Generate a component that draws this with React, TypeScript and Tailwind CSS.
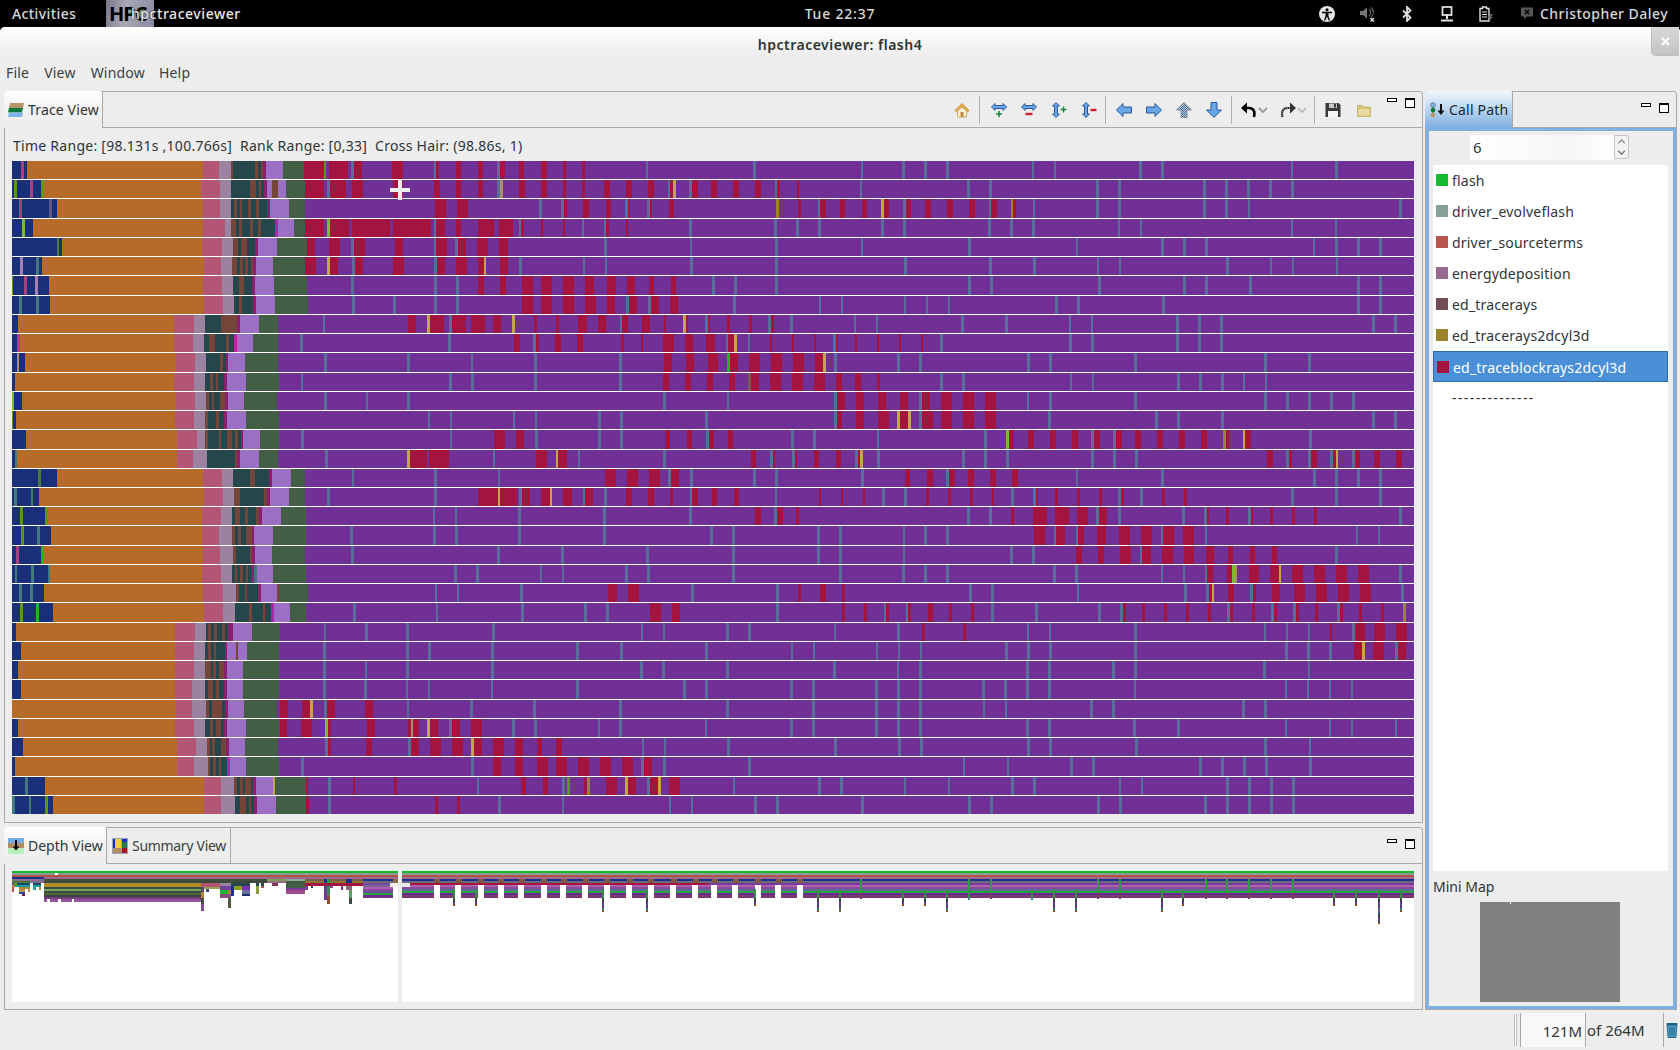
import React from 'react';

const colors: Record<string, string> = {
  N: '#192f7a', O: '#b76b29', P: '#b35676', G: '#9b82a0', T: '#25474c', B: '#744539',
  M: '#8a1f6e', H: '#a82aa8', L: '#9b70c4', F: '#425e44', C: '#a3143f', S: '#586e9b',
  Y: '#c4a54d', y: '#ab8f6a', Q: '#a8437f', g: '#a87fb5', A: '#42797a', W: '#5d9619',
  w: '#7ab93a', E: '#14b92e', D: '#9a8527', X: '#5d5880', K: '#4f7a3a', V: '#703096',
  Z: '#7a5a50',
};

// tops of the 34 rank rows
const rowTops = [161, 180, 199, 219, 238, 257, 276, 296, 315, 334, 353, 373, 392, 411, 430, 450, 469, 488, 507, 526, 546, 565, 584, 603, 623, 642, 661, 680, 700, 719, 738, 757, 777, 796, 815];
const zones = [0, 280, 660, 1040];

// every row: [left stack, bars from x=280, from x=660, from x=1040], values in thirds of a pixel
const rows: string[][] = [
  ['N36-63 Q63-72 N72-81 O81-609 P609-657 G657-693 B693-699 T699-765 B765-774 T774-783 B783-789 M789-798 L798-849 F849-912',
    'C72-132 W132-138 C147-204 S213-222 C222-246 C336-369 S462-468 C468-477 C528-543 C594-609 S651-660 C660-675 C717-732 C783-801 C849-858 C906-915 S1098-1104',
    'S279-288 S603-609 S726-735 S792-801 S858-867 S1116-1122',
    'S42-48 S297-306 S363-372 S753-759 S885-894'],
  ['N36-42 W42-51 N51-90 Q90-99 N99-123 W123-132 O132-603 P603-660 G660-693 T693-750 B750-768 T768-777 B777-783 T783-792 M792-801 L801-816 B816-834 L834-858 F858-915',
    'C75-132 S141-150 C150-198 C216-249 C339-369 C462-480 C528-543 C594-609 S651-660 y660-669 C717-735 C783-801 C849-858 C906-915 C972-990 C1038-1056 C1104-1122',
    'S24-30 C30-39 Y39-48 S87-96 C96-114 C153-171 C219-237 C285-303 S345-351 C351-360 C411-417 S600-606 S921-930 S987-996',
    'S168-177 S234-243 S489-498 S555-564 S621-630 S687-696 S753-762'],
  ['N36-57 Q57-66 N66-147 X147-156 N156-171 O171-609 P609-660 G660-693 T693-702 B702-711 T711-720 B720-726 T726-744 B744-753 T753-768 B768-777 T777-801 M801-810 L810-867 F867-915',
    'C465-498 C531-564 S777-786 S843-852 C852-861 C909-927 C978-993 S1035-1044 C1044-1050 S1101-1110 C1110-1116',
    'C27-42 D348-357 C414-423 S474-480 C480-498 C540-555 C606-621 Y663-672 C672-687 S729-738 C738-753 C795-813 C861-879 C927-945 S987-993 C993-1011 D1053-1059 C1059-1068 S1119-1125',
    'S168-177 S234-243 S489-498 S555-564 S624-630 S1077-1086'],
  ['N36-66 w66-75 N75-99 O99-609 P609-675 G675-693 B693-708 T708-717 B717-726 T726-750 B750-759 T759-774 B774-783 T783-825 H825-834 L834-882 F882-915',
    'C75-132 w141-150 C150-207 C216-330 C339-453 S462-468 C468-495 C528-543 C594-642 C657-699 S717-723 C723-732 C783-789 C849-855 S906-912 S972-978 C978-987 C1038-1044',
    'S87-96 S342-351 S408-417 S474-483 S663-672 S729-738 S984-993 S1050-1059 S1116-1125',
    'S234-240 S300-306 S753-759 S885-891'],
  ['N36-171 K171-177 N177-186 O186-606 P606-666 G666-699 B699-714 T714-723 B723-741 T741-765 M765-774 L774-831 F831-921',
    'C81-105 C147-180 S213-222 C222-255 C345-369 S462-468 C468-501 S525-534 C534-558 C591-624 C657-684 S972-981',
    'S90-96 S345-354 S603-609 S924-933',
    'S108-114 S363-372 S429-438 S495-504 S819-825 S885-894 S951-960 S1017-1026'],
  ['N36-60 g60-69 N69-108 A108-117 N117-126 O126-612 P612-663 G663-696 B696-711 T711-720 B720-729 T729-735 B735-744 T744-753 B753-759 M759-768 L768-819 F819-915',
    'C75-108 Y141-150 C150-174 S216-225 C225-249 C339-372 S462-471 C471-495 C528-561 C594-612 Y612-618 C660-684 S717-726 S909-915 S975-981',
    'S90-99 S345-354 S732-741 S987-996 S1119-1128',
    'S171-177 S237-243 S558-567 S690-696 S756-762 S888-894'],
  ['W36-39 N39-72 Q72-81 N81-105 g105-114 N114-147 O147-609 P609-666 G666-699 T699-717 B717-732 T732-756 M756-765 L765-822 F822-921',
    'S213-222 S462-471 S528-537 C594-612 C660-678 C726-759 C783-816 C849-882 C915-942 C981-1008 C1041-1065 C1107-1122',
    'C33-48 S156-165 S222-231 S345-354 S924-933 S990-999',
    'S174-183 S429-438 S495-504 S627-636 S951-960 S1017-1026'],
  ['N36-57 A57-66 N66-108 A108-117 N117-150 O150-612 P612-669 G669-702 T702-717 B717-726 T726-759 M759-768 L768-825 F825-924',
    'S216-225 S339-348 S462-471 S528-537 C726-759 C783-816 C849-882 C915-948 C981-1005 S1038-1047 C1047-1071 S1104-1113 C1113-1137',
    'C30-54 S219-228 S477-483 S543-549 S732-738 S798-804 S864-870',
    'S45-54 S111-120 S366-375 S951-960 S1017-1026'],
  ['N36-54 O54-522 P522-582 G582-615 T615-663 B663-711 M711-720 L720-777 F777-833',
    'S129-135 C384-408 Y441-450 C450-492 S507-516 C516-558 C573-615 C639-663 Y696-705 C762-771 C828-837 C894-921 C954-978 S1020-1026 C1026-1044 C1086-1110',
    'C12-18 Y69-78 C78-84 S135-144 C144-150 C201-210 C267-276 S324-333 C333-342 S390-399 S582-588 S648-654 S903-912 S1035-1044',
    'S87-93 S153-159 S408-417 S474-483 S540-549 S996-1005 S1062-1071'],
  ['N36-51 Q51-60 O60-522 P522-579 G579-612 T612-627 B627-645 T645-678 B678-687 T687-702 H702-711 L711-759 F759-833',
    'S60-69 S504-513 C702-720 S759-768 C768-777 C825-843 C891-909 C1023-1032 C1083-1089',
    'C9-42 C75-99 C138-165 S198-204 C204-222 Y222-231 S264-270 C330-336 C396-402 C462-468 S519-528 C528-534 C585-591 C651-657 C717-723 C783-789 S840-849',
    'S87-96 S153-162 S408-417 S474-483 S540-549'],
  ['N36-51 y51-57 N57-75 O75-528 P528-585 G585-618 T618-660 B660-669 T669-678 M678-684 L684-735 F735-833',
    'S132-141 S381-390 S573-579 S762-771 S1017-1026',
    'C12-36 C78-102 C144-174 E201-210 C210-234 C267-300 C333-366 C399-432 C465-489 Y489-498 S522-531 S711-720 S777-786 S1101-1110',
    'S27-36 S282-291 S672-681 S804-813'],
  ['N36-45 O45-522 P522-582 G582-615 T615-630 B630-639 T639-648 B648-654 T654-672 M672-681 L681-738 F738-837',
    'S63-69 S507-516 S573-582 S762-771 S1017-1026',
    'C9-27 C75-93 C141-159 C207-225 Z264-273 C273-297 C330-363 C396-429 C462-495 C528-546 C585-603 C651-660 S840-849 S906-915',
    'S90-96 S156-162 S411-420 S477-486 S543-552 S609-615 S675-681'],
  ['w36-42 N42-66 O66-528 P528-585 G585-618 B618-627 T627-636 B636-642 T642-660 B660-675 M675-684 L684-732 F732-831',
    'S132-141 S258-264 S381-390',
    'S9-18 S201-207 S522-531 C531-555 C588-612 C654-678 C720-744 S777-786 C786-810 C843-876 C909-942 C975-1008 S1101-1107',
    'S27-36 S282-291 S672-681 S738-747 S804-813 S870-879 S936-945'],
  ['W36-39 N39-48 O48-525 P525-582 G582-615 B615-624 T624-648 B648-657 T657-672 M672-681 L681-738 F738-837',
    'S444-450 S510-516 S699-705 S765-771 S954-963 S1020-1029',
    'S135-144 S522-531 C531-546 C588-612 C654-687 Y711-720 C720-744 Y744-753 S777-786 C786-819 C843-876 C909-942 C975-1008',
    'S24-33 S345-354 S411-420 S543-552 S996-1005 S1062-1071'],
  ['N36-78 O78-531 P531-591 G591-615 B615-624 T624-657 B657-663 T663-681 B681-696 T696-705 B705-714 T714-723 M723-729 L729-780 F780-837',
    'S63-72 S510-516 C642-675 C708-732 S765-774 S954-963 S1020-1029',
    'C15-30 C81-96 S138-147 C147-162 C204-219 S393-402 S459-468 S651-657 S972-981 w1038-1047 C1047-1062 C1104-1122',
    'C30-48 C96-114 S153-162 C162-180 S219-228 C228-246 C285-303 C351-369 C417-435 C483-501 D549-558 C558-567 Y609-615 C615-633 S807-816'],
  ['N36-45 A45-51 O51-531 P531-579 G579-621 T621-705 B705-711 M711-720 L720-777 F777-833',
    'S135-144 Y381-390 C390-441 C447-507 S639-645 C768-801 Y828-834 C834-861 S894-900',
    'S9-18 C273-288 S330-339 C339-345 S396-405 C405-411 C462-477 C528-543 S585-594 C594-600 Y600-609 S651-660 S906-915 S972-981 S1038-1047',
    'S153-162 S219-228 S285-294 C681-699 S738-747 C747-756 S804-813 C813-831 S870-879 C879-888 Y888-894 S936-945 C945-960 C1002-1020 C1068-1086'],
  ['N36-114 K114-123 N123-171 O171-609 P609-666 G666-699 T699-750 B750-765 T765-807 M807-816 L816-873 F873-915',
    'S216-222 S462-471 S654-660 C975-1008 C1041-1074 C1107-1140',
    'S24-33 C33-57 S90-99 S279-288 S345-354 S603-612 C735-750 C801-819 S858-867 C867-885 C924-942 C990-1008 C1056-1074',
    'S108-114 S363-372 S819-828 S885-894 S951-960 S1017-1026'],
  ['N36-42 A42-51 N51-93 A93-99 N99-117 O117-612 P612-669 G669-702 B702-720 T720-792 B792-801 M801-810 L810-867 F867-915',
    'S141-150 S462-471 C594-654 Y654-660 C660-711 S717-726 C726-750 C783-810 Y810-816 C849-876 S909-915 C915-939 S972-981 C1038-1056 C1104-1122',
    'C30-39 S90-96 C96-114 C156-171 C222-237 S345-351 C477-483 C543-549 C609-615 S666-675 S732-741 C798-807 C864-873 C930-939 C996-1002 S1053-1062 S1119-1128 C1128-1134',
    'C45-54 C111-120 C177-186 S234-243 C243-252 S300-309 C366-375 C432-441 S753-762 S885-894 S1017-1026'],
  ['N36-60 W60-69 N69-135 W135-144 O144-606 P606-663 G663-696 T696-705 B705-720 T720-735 B735-744 T744-768 B768-777 M777-786 L786-843 F843-918',
    'S459-465 S525-531 S714-723 S969-978',
    'S87-96 C285-303 S342-351 C351-369 C408-417 S921-930 S987-996 C1053-1062 C1119-1140',
    'C0-21 C45-87 C111-144 S168-177 C177-201 S234-243 S426-435 S492-501 C501-507 C558-567 S624-633 C633-639 C690-699 C756-765 C822-831 S1077-1086'],
  ['N36-63 W63-72 N72-111 A111-120 N120-153 O153-606 P606-657 G657-696 B696-705 T705-714 B714-723 T723-738 B738-756 M756-762 L762-819 F819-918',
    'S210-219 S459-468 S525-534 S714-723 S969-978',
    'S150-159 S216-225 S471-480 S537-546 S729-735 S792-801 S858-867 C1122-1140',
    'C0-15 S42-48 C48-75 S108-114 C114-132 C171-198 C237-270 C303-336 S363-369 C369-402 C429-462 S495-501 S948-954 S1014-1020'],
  ['N36-48 Q48-57 N57-123 E123-129 O129-609 P609-660 G660-699 B699-708 T708-750 B750-756 M756-765 L765-816 F816-915',
    'S213-222 S651-660 S843-852 S1098-1107',
    'S216-225 S471-480 S537-546 S729-735 S1050-1059 S1116-1125',
    'C108-126 C174-192 C240-273 S300-306 C306-333 C366-399 C432-462 C498-522 C564-579 C630-645 C696-711 S885-894'],
  ['N36-45 A45-51 N51-93 A93-102 N102-144 A144-150 O150-606 P606-663 G663-696 T696-705 B705-711 T711-720 B720-729 T729-738 B738-744 T744-753 M753-762 A762-771 L771-819 F819-918',
    'S522-531 S588-597 S780-786 S846-852 S1035-1044 S1101-1110',
    'S216-225 S537-546 S726-735 S792-801 S858-867',
    'S39-48 S105-114 S363-369 S429-435 S495-501 C501-519 C561-576 w576-585 y585-591 C627-657 C690-717 Y717-723 C756-789 C822-855 C888-921 C954-987 S1077-1086'],
  ['N36-57 A57-66 N66-90 A90-99 N99-132 O132-609 P609-669 G669-708 B708-717 T717-735 B735-741 T741-774 M774-783 L783-831 B831-840 F840-924',
    'S465-471 S531-537 S720-729 C984-1011 C1044-1077',
    'S93-102 S348-357 C414-423 C480-498 C546-555 S927-936 S993-1002',
    'S111-117 S432-441 S498-507 C507-516 Y516-522 C564-582 S630-639 C639-648 C696-720 C762-795 C828-861 C894-927 C960-993 S1083-1092'],
  ['N36-60 W60-69 N69-108 E108-117 N117-159 O159-612 P612-669 G669-705 T705-747 B747-756 T756-789 B789-795 T795-813 H813-822 L822-870 F870-918',
    'S219-228 S468-474 S723-732 S912-921 S978-987 C1110-1140',
    'C0-3 C36-60 S348-357 C546-555 C612-621 S672-678 C678-687 S738-744 C744-753 C804-819 C867-876 C933-942 S993-1002 S1125-1134',
    'S174-183 S240-249 C249-258 C306-315 C372-381 C438-447 C504-513 S561-570 C570-579 C636-645 S693-702 C702-711 S759-768 C768-777 C825-834 S891-900 C900-909 C957-966 C1023-1032 D1089-1098'],
  ['N36-48 O48-525 P525-585 G585-618 T618-624 B624-633 T633-642 B642-651 T651-666 B666-675 T675-684 M684-699 L699-756 F756-840',
    'S132-138 S255-264 S378-387 S636-645 S1083-1089',
    'S9-15 S198-207 S264-273 S522-528 S711-720 C786-795 C909-918 S1101-1107',
    'S27-33 S282-291 S672-678 S738-744 S804-810 C870-876 S936-945 C945-975 C1002-1035 C1068-1101'],
  ['N36-63 O63-525 P525-582 G582-615 T615-624 B624-633 T633-642 B642-648 T648-675 M675-681 L681-708 B708-714 L714-741 F741-837',
    'S129-138 S378-387 S444-453 S633-642 S888-897 S1020-1029',
    'S135-144 S393-399 S459-465 S648-654 S714-720 S780-786 S1035-1044 S1101-1110',
    'S27-36 S282-291 S735-744 S801-810 S867-876 C942-966 Y966-975 C999-1032 S1065-1074 C1074-1098'],
  ['N36-54 O54-525 P525-582 G582-615 B615-633 T633-639 B639-648 T648-657 B657-672 M672-681 L681-729 F729-837',
    'S129-138 S255-261 S378-387 S633-642 S1080-1089',
    'S6-15 S198-207 S519-528 S711-717 S777-786 S1098-1107',
    'S24-33 S216-225 S282-291 S669-678 S804-810'],
  ['N36-63 O63-525 P525-576 G576-615 T615-624 B624-639 T639-648 B648-657 T657-672 M672-681 L681-729 F729-837',
    'S129-138 S252-261 S378-384 S444-450 S633-639 S888-897',
    'S69-78 S135-144 S390-399 S456-465 S645-654 S711-720 S777-786 S966-975 S1032-1041 S1098-1107',
    'S24-33 S282-288 S735-741 S801-807 S867-873 S933-939'],
  ['O36-528 P528-576 G576-618 B618-627 T627-636 B636-666 T666-675 M675-684 L684-732 F732-831',
    'C0-24 C66-90 Y90-99 S132-141 C141-165 C255-279 S381-387 S570-579 S759-768 S1017-1026',
    'S198-207 S456-465 S645-654 S711-720 S777-786 S969-975 S1035-1041',
    'S150-159 S216-225 S606-615 S672-681'],
  ['N36-54 O54-525 P525-582 G582-615 T615-630 B630-639 T639-648 B648-663 T663-672 M672-681 L681-738 F738-837',
    'C0-21 C63-96 w135-144 C144-153 C261-285 C384-393 y393-399 C399-417 Y441-450 C450-474 S507-516 C516-540 C573-606 S696-705 S762-771 S954-960 S1017-1026',
    'S135-141 S390-399 S456-465 S645-654 S711-720 S777-786 S1098-1107',
    'S24-33 S279-288 S411-420 S735-741 S867-873 S933-939 S1065-1071'],
  ['N36-69 O69-531 P531-588 G588-621 B621-630 T630-636 B636-645 T645-663 B663-678 M678-687 L687-735 F735-833',
    'S135-144 C144-153 C258-276 S384-393 C393-417 C450-483 C516-549 Y573-582 C582-606 C639-672 C705-729 C771-786 C828-846 S1086-1092',
    'S12-18 S201-210 S522-531 S714-723 S780-789 S1101-1110',
    'S27-36 S285-294 S672-681 S807-813'],
  ['N36-45 O45-531 P531-582 G582-624 B624-630 T630-639 B639-648 T648-657 B657-663 T663-681 H681-690 L690-738 F738-837',
    'S63-72 S573-582 C639-663 C705-729 C771-804 C828-861 C894-927 C960-993 C1026-1059 S1083-1092 C1092-1116',
    'S9-18 S264-273 S909-915 S1041-1047',
    'S90-99 S156-165 S477-486 S543-552 S609-618 S675-684 S807-816'],
  ['N36-75 A75-84 N84-135 O135-612 P612-663 G663-702 B702-711 T711-720 B720-729 T729-735 B735-753 T753-759 M759-768 L768-819 Y819-825 F825-918',
    'C78-84 S144-153 C219-225 C342-351 S591-597 C723-738 C789-804 S846-855 W861-870 C912-921 D921-930 C978-1011 Y1035-1044 C1044-1068 S1101-1110 C1110-1134 Y1134-1140',
    'Y0-3 C27-60 S219-225 S474-483 S540-549 S732-738 S864-870 S1053-1062 S1119-1128',
    'S237-243 S303-309 S558-567 S624-633 S690-699 S756-765'],
  ['A36-45 N45-87 A87-93 N93-135 W135-144 N144-159 O159-612 P612-663 G663-705 T705-720 B720-738 T738-747 B747-753 T753-762 M762-771 L771-828 F828-918',
    'C78-87 S144-153 C465-474 C531-540 S654-663 S846-852',
    'S27-33 S93-99 S282-291 S348-357 S603-612 S924-933 S990-999',
    'S171-180 S237-246 S492-501 S558-567 S624-633 S690-699 S756-765'],
];

function TraceChart() {
  return (
    <svg width={1402} height={653} viewBox="12 161 1402 653" shapeRendering="crispEdges" className="block">
      <rect x={12} y={161} width={1402} height={653} fill="#ffffff" />
      {rows.map((row, r) => {
        const y = rowTops[r];
        const h = rowTops[r + 1] - y - 1;
        return (
          <g key={r}>
            <rect x={12} y={y} width={1402} height={h} fill={colors.V} />
            {row.map((zone, z) =>
              zone.split(' ').map((bar) => {
                const [a, b] = bar.slice(1).split('-').map(Number);
                return (
                  <rect key={z + bar} x={zones[z] + a / 3} y={y} width={(b - a) / 3} height={h} fill={colors[bar[0]]} />
                );
              }),
            )}
          </g>
        );
      })}
      <rect x={390} y={188} width={20} height={4} fill="#eeeeee" />
      <rect x={398} y={180} width={4} height={20} fill="#eeeeee" />
    </svg>
  );
}

// left part of the depth canvas: [x1, x2, y1, y2, color], x and y in thirds from (0, 810)
const depthLeft: [number, number, number, number, string][] = [
  [36, 132, 201, 207, '#1c2f8a'], [132, 1194, 201, 207, '#9c6a8c'],
  [36, 132, 207, 213, '#8a6e90'], [132, 801, 207, 219, '#3e4a3c'], [801, 858, 207, 213, '#7aa050'], [858, 915, 207, 213, '#8fa8a0'],
  [915, 972, 207, 213, '#7a5a50'], [972, 981, 207, 219, '#1c2f8a'], [981, 990, 207, 219, '#2a9a3a'], [990, 1038, 207, 213, '#7a5a50'],
  [1038, 1056, 207, 219, '#1c2f8a'], [1056, 1089, 207, 213, '#7a5a50'], [1089, 1179, 207, 213, '#1c2f8a'], [1179, 1194, 207, 219, '#8a6a40'],
  [36, 90, 213, 219, '#4a7a38'], [90, 132, 213, 219, '#7a6a90'], [801, 858, 213, 219, '#9c6a8c'], [858, 915, 213, 219, '#3e5a3e'],
  [915, 972, 213, 219, '#8a7a30'], [990, 1038, 213, 219, '#8a7a30'], [1056, 1089, 213, 219, '#8a7a30'], [1089, 1179, 213, 219, '#6c6a80'],
  [36, 42, 219, 225, '#7a4a8a'], [42, 50, 219, 231, '#5a9a30'], [50, 90, 219, 225, '#1a4a6a'], [50, 90, 225, 231, '#12a0a0'], [99, 123, 219, 225, '#1a4a6a'], [99, 123, 225, 231, '#12a0a0'],
  [132, 603, 219, 231, '#b38a26'], [603, 660, 219, 231, '#b35676'], [660, 693, 219, 228, '#9b82a0'], [693, 750, 219, 228, '#25474c'],
  [768, 777, 219, 228, '#25474c'], [783, 792, 219, 228, '#25474c'], [783, 792, 228, 234, '#b55248'], [816, 834, 219, 228, '#7a3a58'], [858, 915, 219, 234, '#425e44'],
  [915, 1089, 219, 228, '#a3143f'], [1089, 1179, 219, 225, '#7a4a9a'], [1089, 1179, 225, 231, '#75689a'],
  [36, 42, 225, 231, '#b8804a'], [57, 90, 231, 237, '#b8803a'], [36, 42, 231, 246, '#b55248'], [84, 90, 237, 246, '#b89050'], [57, 75, 237, 246, '#b89050'], [57, 75, 246, 252, '#2a4a9a'], [66, 75, 252, 258, '#7a1a5a'],
  [99, 108, 231, 240, '#2aa0a0'], [117, 123, 231, 240, '#b87a2a'],
  [132, 603, 231, 237, '#35503c'], [132, 603, 237, 243, '#78a060'], [132, 603, 243, 249, '#3e4a3c'], [132, 603, 249, 255, '#4a6a3a'], [132, 603, 255, 261, '#34443a'], [132, 603, 261, 267, '#7a3a86'],
  [132, 141, 267, 275, '#94559a'], [150, 174, 267, 275, '#94559a'], [183, 216, 267, 275, '#94559a'], [222, 603, 267, 275, '#94559a'],
  [603, 612, 231, 246, '#5a4a6a'], [603, 612, 246, 264, '#b8803a'], [603, 612, 264, 282, '#3e4a3c'], [603, 612, 282, 303, '#8a4a9a'],
  [612, 660, 231, 237, '#9ba050'], [618, 627, 237, 246, '#3a4a8a'], [660, 693, 228, 240, '#7040a0'], [660, 684, 240, 252, '#14b92e'], [660, 693, 252, 264, '#8a4a7a'],
  [684, 693, 240, 252, '#b8803a'], [684, 693, 264, 294, '#4a5a3a'], [693, 702, 228, 258, '#1c2f8a'], [702, 726, 228, 240, '#8ea020'], [726, 750, 228, 240, '#7a30b0'], [726, 750, 240, 252, '#6a70a0'], [726, 750, 252, 258, '#1c2f6a'],
  [768, 777, 228, 252, '#8aa040'], [858, 915, 234, 240, '#7a3a96'], [858, 915, 240, 252, '#a04a90'], [915, 924, 228, 240, '#7040a0'], [933, 939, 228, 234, '#1c2f8a'],
  [972, 981, 228, 270, '#6a3a9a'], [981, 990, 228, 255, '#3a8a5a'], [981, 990, 255, 282, '#8a5030'], [990, 999, 228, 234, '#8a4a9a'], [1023, 1029, 228, 240, '#8a30a0'], [1038, 1056, 228, 240, '#8a6a7a'],
  [1047, 1056, 240, 264, '#5aa060'], [1047, 1056, 264, 282, '#3e4a3c'],
  [1089, 1179, 231, 237, '#b060b0'], [1089, 1179, 237, 243, '#8a4a9a'], [1089, 1179, 243, 249, '#6a4a9a'], [1089, 1179, 249, 255, '#2aa53a'], [1089, 1179, 255, 261, '#6a2a96'], [1089, 1179, 261, 264, '#7a3a70'],
];

const depthBands = ['#1c2f8a', '#6c6a80', '#7a3a9a', '#b060b0', '#8a4a9a', '#5a6a9a', '#2aa53a', '#6a2a96', '#7a3a70'];
const depthGaps = [67, 100, 134, 165, 196, 230, 260, 293, 326, 360, 393, 427, 461, 490, 522, 556, 587, 620];
const depthTicks = [716, 880, 913, 1076, 1110, 1240, 1273, 1306, 1340, 1373];
const depthSpikes: [number, number][] = [[96, 122], [130, 122], [323, 137], [390, 137], [554, 122], [650, 137], [684, 137], [780, 122], [813, 122], [846, 137], [880, 104], [976, 104], [1009, 137], [1043, 137], [1173, 137], [1206, 122], [1436, 122], [1469, 122], [1503, 173], [1537, 137]];
const spikeColors = ['#3e4a3c', '#34443a', '#6a3a9a', '#3a4a8a', '#7a2a7a', '#2a8a7a', '#8a4a9a', '#2a5a9a'];
const toX = (p: number) => 390 + p / 1.522;

function DepthChart() {
  return (
    <svg width={1402} height={131} viewBox="12 871 1402 131" shapeRendering="crispEdges" className="block">
      <rect x={12} y={871} width={1402} height={131} fill="#ffffff" />
      <rect x={12} y={871} width={1402} height={2} fill="#14b92e" />
      <rect x={12} y={873} width={1402} height={2} fill="#8a9e96" />
      <rect x={12} y={875} width={1402} height={2} fill="#b55248" />
      <rect x={402} y={877} width={1012} height={2} fill="#9c6a8c" />
      <rect x={55} y={873} width={3} height={2} fill="#ffffff" />
      {depthLeft.map(([x1, x2, y1, y2, c], i) => (
        <rect key={i} x={x1 / 3} y={810 + y1 / 3} width={(x2 - x1) / 3} height={(y2 - y1) / 3} fill={c} />
      ))}
      {depthBands.map((c, i) => (
        <rect key={c + i} x={402} y={879 + i * 2} width={1012} height={i === 8 ? 3 : 2} fill={c} />
      ))}
      <rect x={402} y={883} width={306} height={2} fill="#a3143f" />
      {depthGaps.map((p) => (
        <g key={p}>
          <rect x={toX(p)} y={879} width={6} height={4} fill="#7c5a46" />
          <rect x={toX(p) - 0.5} y={885} width={6} height={13} fill="#ffffff" />
        </g>
      ))}
      {depthTicks.map((p) => (
        <g key={p}>
          <rect x={toX(p)} y={879} width={2} height={14} fill="#2f9a46" />
          <rect x={toX(p)} y={893} width={2} height={6} fill="#7a3a60" />
        </g>
      ))}
      {depthSpikes.map(([p, end]) => {
        const bottom = 865 + end / 3;
        const n = Math.ceil((bottom - 898) / 2);
        return (
          <g key={p}>
            <rect x={toX(p)} y={889} width={2} height={9} fill="#3a8a4a" />
            {Array.from({ length: n }).map((_, i) => (
              <rect key={i} x={toX(p)} y={898 + i * 2} width={2} height={2} fill={i === n - 1 && n > 2 ? '#8a4a20' : n <= 2 ? '#3a7ab0' : spikeColors[i % 8]} />
            ))}
          </g>
        );
      })}
      <rect x={398} y={871} width={4} height={131} fill="#ededed" />
      <rect x={390} y={883} width={20} height={4} fill="#ededed" />
    </svg>
  );
}

const arrowProps = { fill: '#6aa5e8', stroke: '#2a5a9a', strokeWidth: 1, strokeLinejoin: 'round' as const };

function Svg({ children, className = '' }: { children: React.ReactNode; className?: string }) {
  return (
    <svg viewBox="0 0 16 16" className={`h-4 w-4 shrink-0 ${className}`}>
      {children}
    </svg>
  );
}

function Plus({ x, y, c }: { x: number; y: number; c: string }) {
  return <path d={`M${x - 3} ${y}h6M${x} ${y - 3}v6`} stroke={c} strokeWidth={1.6} />;
}

const Separator = ({ className }: { className: string }) => <div className={`h-[28px] w-px shrink-0 bg-[#b0b0b0] ${className}`} />;

function Toolbar() {
  return (
    <div className="ml-auto flex items-center pr-[7px]">
      <Svg>
        <path d="M1 8.500 8 1.500l7 7-1.500 1.200L8 4.500 2.500 9.700Z" fill="#f0b050" stroke="#c07a20" strokeWidth={0.8} />
        <path d="M3.500 9 8 5l4.500 4v6h-9Z" fill="#fdf3d0" stroke="#c89a50" strokeWidth={0.8} />
        <rect x="6.500" y="10" width="3" height="5" fill="#c08a40" />
      </Svg>
      <Separator className="ml-[9px]" />
      <Svg className="ml-[11px]">
        <path d="M.5 5 4 1.500v2h8v-2L15.500 5 12 8.500v-2H4v2Z" {...arrowProps} />
        <Plus x={8} y={12} c="#1a8a3a" />
      </Svg>
      <Svg className="ml-[14px]">
        <path d="M.5 5 4 1.500v2h8v-2L15.500 5 12 8.500v-2H4v2Z" {...arrowProps} />
        <path d="M4.500 12h7" stroke="#d02030" strokeWidth={2.4} />
      </Svg>
      <Svg className="ml-[14px]">
        <path d="M5 .5 8.500 4h-2v8h2L5 15.500 1.500 12h2V4h-2Z" {...arrowProps} />
        <Plus x={12.5} y={7.5} c="#1a8a3a" />
      </Svg>
      <Svg className="ml-[14px]">
        <path d="M5 .5 8.500 4h-2v8h2L5 15.500 1.500 12h2V4h-2Z" {...arrowProps} />
        <path d="M9.500 8h6" stroke="#d02030" strokeWidth={2.4} />
      </Svg>
      <Separator className="ml-[8px]" />
      <Svg className="ml-[10px]">
        <path d="M.5 8 7 1.500v3.500h8.500v6H7v3.500Z" {...arrowProps} />
      </Svg>
      <Svg className="ml-[14px]">
        <path d="M15.500 8 9 1.500v3.500H.5v6H9v3.500Z" {...arrowProps} />
      </Svg>
      <svg viewBox="0 0 16 16" className="ml-[14px] h-4 w-4 shrink-0">
        <defs>
          <pattern id="dither" width="2" height="2" patternUnits="userSpaceOnUse">
            <rect width="2" height="2" fill="#c8d4e4" />
            <rect width="1" height="1" fill="#3f5f8e" />
            <rect x="1" y="1" width="1" height="1" fill="#3f5f8e" />
          </pattern>
        </defs>
        <path d="M8 .5l7.500 7.500h-4.500v7.500H5V8H.5Z" fill="url(#dither)" stroke="#7f93aa" strokeWidth={1} />
      </svg>
      <Svg className="ml-[14px]">
        <path d="M8 15.500 15.500 8H11V.5H5V8H.5Z" {...arrowProps} />
      </Svg>
      <Separator className="ml-[9px]" />
      <Svg className="ml-[9px]">
        <path d="M0 6 6 .5v11Z" fill="#000" />
        <path d="M5 6h3c4 0 6.500 3 5 9" fill="none" stroke="#000" strokeWidth={2.6} />
      </Svg>
      <svg viewBox="0 0 10 6" className="ml-[1px] h-[6px] w-[10px] shrink-0">
        <path d="M1 1l4 4 4-4" fill="none" stroke="#9a9a9a" strokeWidth={1.8} />
      </svg>
      <Svg className="ml-[12px]">
        <path d="M16 6 10 .5v11Z" fill="#333" />
        <path d="M11 6H8C3.500 6 1 9 2.500 15" fill="none" stroke="#222" strokeWidth={2.2} strokeDasharray="1.500 .5" />
      </Svg>
      <svg viewBox="0 0 10 6" className="ml-[1px] h-[6px] w-[10px] shrink-0">
        <path d="M1 1l4 4 4-4" fill="none" stroke="#bdbdbd" strokeWidth={1.8} />
      </svg>
      <Separator className="ml-[7px]" />
      <Svg className="ml-[10px]">
        <path d="M.5 1h13l2 2v12H.5Z" fill="#3a3a3a" />
        <rect x="4" y="1.500" width="8" height="4.500" fill="#c8c8c8" />
        <rect x="9" y="2" width="2" height="3.500" fill="#3a3a3a" />
        <rect x="3" y="9" width="10" height="6" fill="#f4f4f4" />
      </Svg>
      <Svg className="ml-[15px]">
        <path d="M1.500 3.500h5l1 1.500h7v9.500h-13Z" fill="#d6c67a" stroke="#c0ae62" strokeWidth={0.8} />
        <rect x="2.500" y="7" width="11" height="6.500" fill="#e6da9e" />
      </Svg>
      <ViewButtons className="ml-[15px]" />
    </div>
  );
}

function ViewButtons({ className = '' }: { className?: string }) {
  return (
    <div className={`-mt-[14px] flex shrink-0 items-start gap-[8px] ${className}`}>
      <div className="h-[4px] w-[10px] border border-black bg-white" />
      <div className="h-[10px] w-[10px] border border-black border-t-2 bg-white" />
    </div>
  );
}

function TraceIcon() {
  return (
    <svg viewBox="0 0 16 16" className="h-4 w-4 shrink-0">
      <path d="M2 1h14l-1 5H1Z" fill="#b89468" />
      <path d="M1 6h14l-1 4.500H0Z" fill="#0d7a3a" />
      <path d="M1 10.500h14l-1 4.500H0Z" fill="#7fb6ea" />
    </svg>
  );
}

function DepthIcon() {
  return (
    <svg viewBox="0 0 16 16" className="h-4 w-4 shrink-0">
      <rect width="16" height="5" fill="#74aee0" />
      <rect y="5" width="16" height="5" fill="#b09068" />
      <rect y="10" width="16" height="6" fill="#b8f0b8" />
      <path d="M8 12.500 4.500 8.500H7V2h2v6.500h2.500Z" fill="#000" />
    </svg>
  );
}

function SummaryIcon() {
  return (
    <svg viewBox="0 0 16 16" className="h-4 w-4 shrink-0">
      <rect width="16" height="16" fill="#9aa0c8" />
      <rect x="1" y="1" width="2" height="9" fill="#0f2ad0" />
      <rect x="3" y="1" width="6" height="9" fill="#f0d030" />
      <rect x="1" y="10" width="8" height="5" fill="#b09060" />
      <rect x="10" y="1" width="5" height="3" fill="#2030b0" />
      <rect x="10" y="4" width="5" height="6" fill="#2a7a3a" />
      <rect x="10" y="10" width="5" height="5" fill="#b01020" />
    </svg>
  );
}

function CallPathIcon() {
  return (
    <svg viewBox="0 0 16 16" className="h-4 w-4 shrink-0">
      <path d="M4 2v12" stroke="#555" strokeWidth={1} />
      <circle cx="4" cy="3" r="2.300" fill="#7fb6ea" stroke="#456" strokeWidth={0.6} />
      <circle cx="4" cy="8" r="2.300" fill="#0d7a3a" />
      <circle cx="4" cy="13" r="2.300" fill="#b89468" />
      <path d="M12 13 8.500 8.500H11V2h2v6.500h2.500Z" fill="#111" />
    </svg>
  );
}

function ActiveTab({ icon, label, className }: { icon: React.ReactNode; label: string; className: string }) {
  return (
    <div className={`-mb-px -ml-px -mt-px flex shrink-0 items-center gap-[4px] rounded-tl-[3px] rounded-tr-[2px] border-r border-[#a8a8a8] pl-[4px] ${className}`}>
      {icon}
      <span>{label}</span>
    </div>
  );
}

const callPath = [
  { name: 'flash', color: '#14bb32' },
  { name: 'driver_evolveflash', color: '#86a198' },
  { name: 'driver_sourceterms', color: '#b9544c' },
  { name: 'energydeposition', color: '#9a6a8e' },
  { name: 'ed_tracerays', color: '#714e53' },
  { name: 'ed_tracerays2dcyl3d', color: '#9b8329' },
  { name: 'ed_traceblockrays2dcyl3d', color: '#a3143f', selected: true },
  { name: '--------------', dashes: true },
];

function TopBar() {
  return (
    <div className="grid h-[27px] shrink-0 grid-cols-[1fr_auto_1fr] items-center bg-black text-[14px] font-medium text-[#d8d8d8]">
      <div className="flex h-full items-center pl-[12px]">
        <span className="w-[65px] tracking-[0.4px]">Activities</span>
        <div className="ml-[29px] flex h-full w-[48px] shrink-0 items-center overflow-hidden bg-[linear-gradient(100deg,#77778a,#a8a8b8_40%,#8a8aa2)] pl-[3px] text-[20px] font-bold leading-none tracking-[-1px] text-black">
          HPC
        </div>
        <span className="z-10 -ml-[23px] tracking-[0.55px] text-[#e8e8e8] [text-shadow:0_0_2px_#000]">hpctraceviewer</span>
      </div>
      <span className="tracking-[0.8px]">Tue 22:37</span>
      <div className="flex h-full items-center justify-end pr-[12px]">
        <svg viewBox="0 0 16 16" className="mr-[24px] h-4 w-4 fill-[#e4e4e4]">
          <circle cx="8" cy="8" r="8" />
          <circle cx="8" cy="3.800" r="1.500" fill="#000" />
          <path d="M3 5.800h10v1.400H9.500V10l1.500 4.500H9.700L8 10.500l-1.700 4H5L6.500 10V7.200H3Z" fill="#000" />
        </svg>
        <svg viewBox="0 0 16 16" className="mr-[27px] h-4 w-4">
          <path d="M1 5h3l4-3.500v11L4 9H1Z" fill="#777" />
          <path d="M10 3c2 2 2 5 0 7M12 1.500c3 3 3 7 0 10" fill="none" stroke="#666" strokeWidth={1.2} />
          <path d="M11.500 12l3.500 3.500M15 12l-3.500 3.500" stroke="#ddd" strokeWidth={1.5} />
        </svg>
        <svg viewBox="0 0 10 16" className="mr-[29px] h-4 w-[10px]">
          <path d="M1 4.500l7.500 7L5 15V1l3.500 3.500L1 11.500" fill="none" stroke="#e0e0e0" strokeWidth={1.8} />
        </svg>
        <svg viewBox="0 0 12 16" className="mr-[26px] h-4 w-[12px]">
          <rect x="1.500" y="1" width="9" height="8" fill="none" stroke="#e0e0e0" strokeWidth={1.8} />
          <path d="M6 9v4M0 14.500h12" stroke="#e0e0e0" strokeWidth={2} />
        </svg>
        <svg viewBox="0 0 14 16" className="mr-[27px] h-4 w-[14px]">
          <path d="M1 2.500h2.500V1h4v1.500H10V15H1Z" fill="none" stroke="#e0e0e0" strokeWidth={1.4} />
          <path d="M3 6h5M3 8.500h5M3 11h5" stroke="#e0e0e0" strokeWidth={1} />
          <path d="M11 8h3l-2 3h2l-4 4 1-3H9Z" fill="#666" />
        </svg>
        <svg viewBox="0 0 14 16" className="mr-[6px] h-4 w-[14px]">
          <path d="M1 1.500h12v9H7l-3 3v-3H1Z" fill="#555" />
          <path d="M5 4l4 4M9 4 5 8" stroke="#000" strokeWidth={1.5} />
        </svg>
        <span className="tracking-[0.45px]">Christopher Daley</span>
      </div>
    </div>
  );
}

export default function App() {
  return (
    <div className="relative flex h-[1050px] w-[1680px] flex-col overflow-hidden bg-black font-['Noto_Sans',sans-serif] text-[14px] leading-none text-[#2e3436]">
      <TopBar />
      <div className="flex min-h-0 flex-1 flex-col rounded-t-[5px] bg-[#ededed]">
        <div className="flex h-[33px] shrink-0 items-center justify-center rounded-t-[5px] bg-[linear-gradient(#ffffff,#f0f0f0_70%,#ededed)] pt-[2px] text-[14px] font-semibold tracking-[0.5px] text-[#2e3436]">
          hpctraceviewer: flash4
        </div>
        <div className="flex h-[26px] shrink-0 items-center pl-[6px] text-[14px] tracking-[0.2px] text-[#3a3f40]">
          <span>File</span>
          <span className="ml-[15px]">View</span>
          <span className="ml-[15px]">Window</span>
          <span className="ml-[14px]">Help</span>
        </div>

        <div className="mt-[5px] flex h-[919px] shrink-0 gap-[2px] pl-[4px]">
          <div className="flex w-[1419px] shrink-0 flex-col gap-[4px]">
            <section className="h-[732px] rounded-t-[3px] border border-[#a8a8a8]">
              <div className="flex h-[36px] items-center border-b border-[#a8a8a8]">
                <ActiveTab
                  icon={<TraceIcon />}
                  label="Trace View"
                  className="h-[37px] w-[99px] bg-[linear-gradient(#ffffff,#f2f2f2_50%,#ededed)] tracking-[0.15px]"
                />
                <Toolbar />
              </div>
              <div className="flex h-[33px] items-center pl-[8px] pt-[3px] tracking-[0.27px]">Time Range: [98.131s ,100.766s]&nbsp; Rank Range: [0,33]&nbsp; Cross Hair: (98.86s, 1)</div>
              <div className="pl-[7px]">
                <TraceChart />
              </div>
            </section>
            <section className="h-[183px] rounded-t-[3px] border border-[#a8a8a8]">
              <div className="flex h-[36px] items-center border-b border-[#a8a8a8]">
                <ActiveTab
                  icon={<DepthIcon />}
                  label="Depth View"
                  className="h-[37px] w-[103px] bg-[linear-gradient(#ffffff,#f2f2f2_50%,#ededed)]"
                />
                <div className="flex h-full w-[124px] shrink-0 items-center gap-[4px] border-r border-[#a8a8a8] pl-[5px] tracking-[-0.3px] text-[#3a3f40]">
                  <SummaryIcon />
                  <span>Summary View</span>
                </div>
                <div className="ml-auto pr-[7px] pt-[14px]">
                  <ViewButtons />
                </div>
              </div>
              <div className="pl-[7px] pt-[7px]">
                <DepthChart />
              </div>
            </section>
          </div>

          <aside className="flex w-[252px] shrink-0 flex-col rounded-t-[3px] border border-[#a8a8a8]">
            <div className="flex h-[36px] shrink-0 items-center border-b border-[#a8a8a8]">
              <ActiveTab
                icon={<CallPathIcon />}
                label="Call Path"
                className="h-[37px] w-[88px] bg-[linear-gradient(#f2f6fc,#c4dcf4_40%,#7fb0e3)] tracking-[0.2px] text-[#20282a]"
              />
              <div className="ml-auto pr-[7px] pt-[14px]">
                <ViewButtons />
              </div>
            </div>
            <div className="flex min-h-0 flex-1 flex-col border-[3px] border-[#7fb0e3] bg-[#ededed]">
              <div className="flex h-[34px] shrink-0 items-start pl-[41px] pt-[4px]">
                <div className="flex h-[25px] w-[144px] items-center bg-[linear-gradient(90deg,#ffffff,#f6f6f6_70%,#ffffff)] pl-[3px] text-[15px]">6</div>
                <div className="flex h-[24px] w-[15px] flex-col items-center justify-around rounded-r-[3px] border border-[#c4c4c4] bg-[#f2f2f2]">
                  <svg viewBox="0 0 10 6" className="h-[5px] w-[9px]"><path d="M1 5l4-4 4 4" fill="none" stroke="#8a9296" strokeWidth={1.6} /></svg>
                  <svg viewBox="0 0 10 6" className="h-[5px] w-[9px]"><path d="M1 1l4 4 4-4" fill="none" stroke="#6a7276" strokeWidth={1.6} /></svg>
                </div>
              </div>
              <div className="ml-[4px] mr-[5px] h-[706px] shrink-0 bg-white tracking-[0.2px]">
                {callPath.map((item) => (
                  <div
                    key={item.name}
                    className={`flex h-[31px] items-start pl-[3px] pt-[9px] ${
                      item.selected ? 'border border-[#2f6cad] bg-[#4a90d9] pl-[2px] pt-[8px] text-white' : ''
                    }`}
                  >
                    <div className="h-[12px] w-[12px] shrink-0" style={{ backgroundColor: item.color }} />
                    <span className={`ml-[4px] leading-[14px] ${item.dashes ? 'tracking-[1.4px]' : ''}`}>{item.name}</span>
                  </div>
                ))}
              </div>
              <div className="ml-[4px] pt-[9px]">Mini Map</div>
              <div className="relative ml-[51px] mt-[8px] h-[100px] w-[140px] bg-[#808080]">
                <div className="absolute left-[30px] top-0 h-[2px] w-px bg-white" />
              </div>
            </div>
          </aside>
        </div>

        <div className="flex min-h-0 flex-1 items-center justify-end">
          <div className="mr-[3px] h-[32px] w-[3px] border-x border-[#bcbcbc] bg-white" />
          <div className="flex h-[34px] w-[144px] items-center border-l border-r border-[#a8a8a8] bg-[#ededed] text-[15px]">
            <div className="h-full w-[65px] border-r border-[#a8a8a8] bg-[#f8f8f8] pr-[3px] pt-[11px] text-right">121M</div>
            <span className="pl-[1px]">of 264M</span>
          </div>
          <svg viewBox="0 0 12 16" className="mx-[2px] h-[16px] w-[12px]">
            <path d="M1 3h10l-1 12.500H2Z" fill="#4a9cc0" stroke="#1c5c80" strokeWidth={0.8} />
            <path d="M4 5v9M6 5v9M8 5v9" stroke="#1c5c80" strokeWidth={0.8} />
            <rect x="0.5" y="1" width="11" height="2" rx="1" fill="#1c5c80" />
          </svg>
        </div>
      </div>

      <div className="absolute right-px top-[27px] flex h-[29px] w-[28px] items-center justify-center rounded-bl-[5px] border-b border-l border-[#bdbdbd] bg-[linear-gradient(#d8d8d8,#c4c4c4)]">
        <svg viewBox="0 0 10 10" className="h-[9px] w-[9px]"><path d="M1 1l8 8M9 1 1 9" stroke="#fff" strokeWidth={2.4} /></svg>
      </div>
    </div>
  );
}
